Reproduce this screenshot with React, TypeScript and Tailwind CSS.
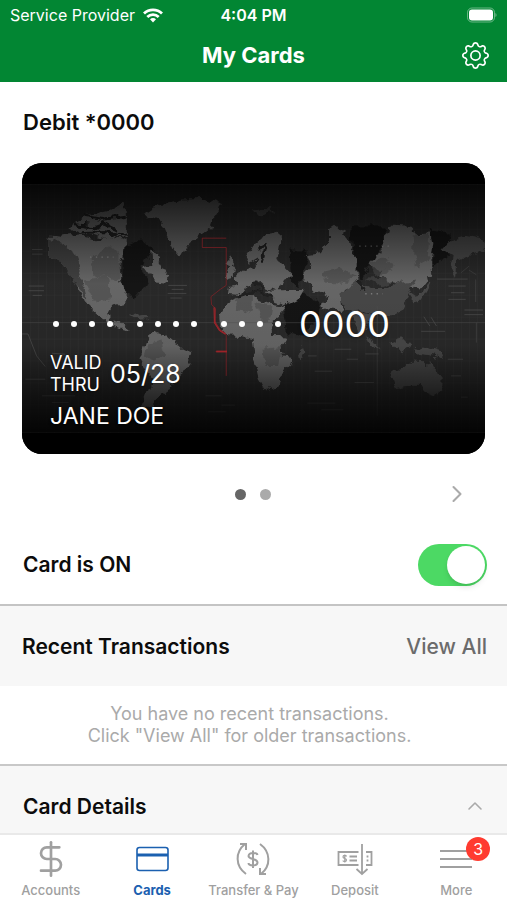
import { useState } from 'react';
import type { ReactNode } from 'react';
import { ChevronRight, ChevronUp, DollarSign } from 'lucide-react';
import { BsGear } from 'react-icons/bs';

const MAJOR_LAND = [
  // North America
  'M76 208L100 212L160 205L215 222L262 212L303 226L300 262L284 290L286 345L300 385L298 412L262 420L250 440L256 462L284 468L312 494L290 490L252 470L222 448L192 420L160 372L148 330L120 300L76 272Z',
  'M140 190L152 168L180 150L215 140L250 132L282 116L303 112L303 220L270 210L240 216L205 206L170 204Z',
  // Greenland
  'M356 146L400 116L470 100L540 98L592 116L570 150L560 182L530 206L494 230L476 262L464 270L446 248L430 212L412 170L384 158Z',
  // Labrador
  'M376 250L396 272L414 300L432 330L428 350L392 346L372 322L356 300L380 296Z',
  // South America
  'M366 520L392 500L430 515L452 535L504 560L492 602L462 626L440 668L408 690L380 728L350 724L362 690L384 640L360 612L344 582Z',
  // Europe
  'M664 268L686 236L718 208L764 200L770 232L762 282L806 330L776 344L760 376L722 362L708 348L686 356L664 372L640 386L610 384L614 362L640 356L628 336L660 312L688 302L700 276L672 292Z',
  'M604 336L620 300L606 292L616 276L632 300L628 330Z',
  // Africa
  'M600 420L636 394L686 384L700 404L746 414L784 420L760 450L742 462L746 510L790 512L768 542L772 572L806 576L798 604L772 628L766 656L724 674L706 640L694 590L684 520L650 510L614 508L586 478L584 446Z',
  // Middle East
  'M730 374L790 372L840 372L826 396L786 416L752 404Z',
  // Western Russia and Central Asia
  'M834 330L862 300L848 264L886 258L914 224L914 194L932 182L958 196L976 218L984 260L998 286L996 320L1008 350L962 372L950 400L956 440L928 424L896 436L890 410L916 392L868 372Z',
  // Siberia
  'M1034 306L1052 270L1076 256L1070 220L1096 196L1098 178L1156 182L1176 204L1220 202L1228 232L1218 290L1222 326L1186 370L1148 358L1108 352L1068 330L1080 308Z',
];

const MINOR_LAND = [
  'M948 386L1000 344L1040 366L1090 366L1124 352L1176 340L1154 384L1136 430L1098 450L1050 448L1010 430L962 436Z',
  'M980 430L1040 446L1026 486L1010 512L992 478Z',
  'M1146 378L1164 382L1178 392L1194 382L1206 356L1222 348L1206 380L1192 402L1164 406Z',
  'M1098 636L1104 612L1140 604L1164 584L1196 586L1208 598L1218 582L1230 604L1256 636L1254 672L1228 692L1204 684L1186 660L1152 660L1112 668Z',
  'M1172 540L1210 548L1250 560L1258 580L1222 568L1184 564Z',
  'M688 130L742 122L750 134L712 156Z',
  'M1100 530L1140 516L1162 540L1130 566Z',
  'M1024 510L1048 524L1066 550L1046 540Z',
  'M820 558L836 540L842 560L826 590Z',
  'M318 446L350 440L374 456L340 458Z',
  // Kamchatka
  'M1256 250L1288 216L1330 206L1378 216L1386 250L1346 262L1300 284L1296 330L1280 300L1286 270Z',
];

const DETAILS = [
  'M200 270L262 240L284 262L284 340L250 330L206 334Z',
  'M178 340L250 330L256 400L210 410Z',
  'M372 530L410 520L418 572L386 590L360 572Z',
  'M636 394L686 386L682 440L640 430Z',
  'M690 408L744 418L738 456L708 462Z',
  'M714 548L770 544L760 600L720 600Z',
  'M900 316L950 304L990 330L962 350L914 348L890 330Z',
  'M1034 300L1070 274L1108 290L1100 320L1052 330Z',
  'M1166 204L1216 206L1210 280L1180 310L1168 270Z',
  'M1020 338L1080 334L1106 350L1070 360Z',
];

const MARKINGS =
  'M30 260H62M30 274H62M20 370H66M20 384H66M32 398H60M440 368H496M450 380H486M438 392H494M446 406H480M1248 349H1340M1282 370H1334M1290 390H1330M1282 410H1334M1200 506H1272M1208 462L1226 490M1230 464L1246 490M1330 442H1386M1330 456H1386M860 580H886M940 560H990M880 626H932M976 590H1010M1032 574H1072M1000 660H1058M858 722H942M900 742H966M552 700H600M600 728H640M560 748H612M1280 590H1326M1290 640H1320M1320 704H1340M90 720H140M60 700H160M0 514H18L44 580L70 612M90 572L130 575M10 650H70';

function WorldMap() {
  return (
    <svg className="absolute inset-0 h-full w-full" viewBox="0 0 1392 876" preserveAspectRatio="xMidYMid slice" aria-hidden="true">
      <defs>
        <pattern id="grid" width="24" height="66" patternUnits="userSpaceOnUse">
          <path d="M1 0V66M0 1H24" stroke="#3a3a3a" strokeWidth="1.5" fill="none" />
        </pattern>
        <filter id="coast" x="-5%" y="-5%" width="110%" height="110%">
          <feTurbulence type="fractalNoise" baseFrequency="0.035" numOctaves="3" seed="4" />
          <feDisplacementMap in="SourceGraphic" scale="30" xChannelSelector="R" yChannelSelector="G" />
          <feGaussianBlur stdDeviation="1.5" />
        </filter>
        <linearGradient id="shade" x1="0" y1="0" x2="0" y2="1">
          <stop offset="0" stopColor="#000" stopOpacity="0.84" />
          <stop offset="0.18" stopColor="#000" stopOpacity="0.5" />
          <stop offset="0.4" stopColor="#000" stopOpacity="0.06" />
          <stop offset="0.65" stopColor="#000" stopOpacity="0.1" />
          <stop offset="0.85" stopColor="#000" stopOpacity="0.6" />
          <stop offset="1" stopColor="#000" stopOpacity="0.9" />
        </linearGradient>
      </defs>
      <rect width="1392" height="876" fill="#000" />
      <rect y="64" width="1392" height="746" fill="#2b2b2b" />
      <rect y="64" width="1392" height="746" fill="url(#grid)" opacity="0.6" />
      <g transform="translate(9 10)">
        <g filter="url(#coast)">
          <g fill="#191919">
            <path d="M290 240L350 220L390 250L350 300L370 345L330 400L290 380Z" />
            <path d="M796 250L850 260L840 310L826 360L800 350Z" />
            <path d="M780 420L830 380L890 410L880 450L836 510L790 500Z" />
            <path d="M980 180L1090 180L1070 250L1030 310L1010 340L990 290Z" />
            <path d="M1220 190L1280 200L1270 270L1226 300Z" />
          </g>
          <g fill="#6c6c6c">
            {MAJOR_LAND.map(d => <path key={d} d={d} />)}
          </g>
          <g fill="#4c4c4c">
            {MINOR_LAND.map(d => <path key={d} d={d} />)}
          </g>
          <g fill="#4f4f4f" opacity="0.6">
            {DETAILS.map(d => <path key={d} d={d} />)}
          </g>
          <path d="M76 215L140 250L170 330L190 410L150 350L120 300L76 272Z" fill="#444" />
          <path
            d="M150 176L210 182L240 170L280 190M180 150L230 160L300 150M170 200L240 196L300 208M700 250L724 238L710 290M680 352L710 364L724 390M1000 340L1020 370M640 390L690 376L740 392"
            stroke="#202020" strokeWidth="9" fill="none"
          />
        </g>
      </g>
      <path d={MARKINGS} stroke="#5a5a5a" strokeWidth="3" fill="none" opacity="0.6" />
      <path d="M1364 350V418M1366 480V540M1320 330L1344 310M1344 322L1366 336M0 480H1392M1068 430V760" stroke="#555" strokeWidth="3" fill="none" opacity="0.5" />
      <path d="M205 283H275M1014 250H1110M1032 393H1084" stroke="#bbb" strokeWidth="4" strokeDasharray="4 13" opacity="0.5" />
      <rect y="64" width="1392" height="746" fill="url(#shade)" />
      <path
        d="M614 226H542V254H614V368L596 380L568 402L570 426L582 438L578 480L594 504L614 516V640M582 567H616"
        stroke="#a32026" strokeWidth="3" fill="none" opacity="0.55"
      />
      <path d="M578 434L580 480L594 502L612 514M584 567H616" stroke="#c0242b" strokeWidth="6" fill="none" opacity="0.6" />
    </svg>
  );
}

function DotGroup() {
  return (
    <span className="flex gap-3" aria-hidden="true">
      {[0, 1, 2, 3].map(i => <span key={i} className="h-1.5 w-1.5 rounded-full bg-white" />)}
    </span>
  );
}

function TransferIcon() {
  return (
    <svg width="34" height="34" viewBox="0 0 34 34" fill="none" stroke="currentColor" strokeWidth="2">
      <path d="M10 32C-1 24 -1 10 9 2M4 2H10V8" />
      <path d="M24 2C35 10 35 24 25 32M30 32H24V26" />
      <path d="M21.500 13C21 10.500 13 10 12.500 14C12.500 18 21.500 16 21.500 20.500C21.500 24.500 12.500 24 12.500 21M17 8.500V26" strokeWidth="2" />
    </svg>
  );
}

function DepositIcon() {
  return (
    <svg width="36" height="34" viewBox="0 0 36 34" fill="none" stroke="currentColor" strokeWidth="1.800">
      <path d="M21.500 10H1.500V23H21.500M29 10H34.500V23H29" />
      <path d="M25 2V32M19.500 27L25 32L30.500 27" />
      <path d="M12.500 14.500H20M12.500 18.500H20M30.500 13.500V15.500M30.500 17.500V19.500" />
      <path d="M9.500 14.500C9 13 6 13 6 15C6 17 9.500 16 9.500 18C9.500 20 6 20 6 18.500M7.800 12.500V20.500" strokeWidth="1.200" />
    </svg>
  );
}

function CardsIcon() {
  return (
    <svg width="33" height="26" viewBox="0 0 33 26" fill="none" stroke="currentColor">
      <rect x="1" y="1.500" width="31" height="23" rx="2.500" strokeWidth="1.600" />
      <path d="M1 9H32" strokeWidth="3" />
    </svg>
  );
}

function MoreIcon() {
  return (
    <svg width="32" height="34" viewBox="0 0 32 34" stroke="currentColor" strokeWidth="2">
      <path d="M0 9H32M0 17H32M0 25H32" />
    </svg>
  );
}

const TABS: { label: string; icon: ReactNode; badge?: number }[] = [
  { label: 'Accounts', icon: <DollarSign size={40} strokeWidth={1.6} /> },
  { label: 'Cards', icon: <CardsIcon /> },
  { label: 'Transfer & Pay', icon: <TransferIcon /> },
  { label: 'Deposit', icon: <DepositIcon /> },
  { label: 'More', icon: <MoreIcon />, badge: 3 },
];

function Header() {
  return (
    <header className="shrink-0 bg-[#028633] text-white">
      <div className="grid h-7 grid-cols-3 items-center px-2.5 pt-0.5 text-base">
        <div className="flex items-center gap-2 whitespace-nowrap">
          <span>Service Provider</span>
          <svg width="20" height="15" viewBox="0 0 20 15" fill="none" stroke="currentColor" strokeWidth="2.800" className="shrink-0">
            <path d="M1 5.500C6 .6 14 .6 19 5.500" />
            <path d="M4.300 9C7.500 5.900 12.500 5.900 15.700 9" />
            <path d="M7 11.200C8.800 9.600 11.200 9.600 13 11.200L10 14.400Z" fill="currentColor" stroke="none" />
          </svg>
        </div>
        <span className="text-center font-semibold">4:04 PM</span>
        <svg width="32" height="16" viewBox="0 0 32 16" className="justify-self-end">
          <rect x="2.500" y="1" width="27" height="14" rx="4.500" fill="none" stroke="#fff" strokeOpacity="0.4" />
          <rect x="4" y="2.500" width="24" height="11" rx="3" fill="#fff" />
          <path d="M30.500 6V10C31.800 9.300 31.800 6.700 30.500 6Z" fill="#fff" fillOpacity="0.5" />
        </svg>
      </div>
      <div className="grid h-[54px] grid-cols-3 items-center px-[18px]">
        <h1 className="col-start-2 text-center text-[22px] font-bold">My Cards</h1>
        <button type="button" aria-label="Settings" className="justify-self-end">
          <BsGear size={27} />
        </button>
      </div>
    </header>
  );
}

export default function App() {
  const [cardOn, setCardOn] = useState(true);

  return (
    <div className="flex h-screen flex-col bg-white font-['Inter','Liberation_Sans',sans-serif] text-[#0c0c0c]">
      <Header />

      <main className="min-h-0 flex-1 overflow-y-auto [scrollbar-width:none]">
        <section>
          <h2 className="flex h-[81px] items-center px-[23px] text-[22px] font-semibold">Debit *0000</h2>

          <div className="relative mx-[22px] aspect-[464/292] overflow-hidden rounded-[20px] bg-black text-white">
            <WorldMap />
            <div className="relative flex h-full flex-col justify-end px-7 pb-[22px] text-shadow-md">
              <div className="mb-2 flex items-center pl-[3px]">
                <div className="flex gap-6">
                  <DotGroup />
                  <DotGroup />
                  <DotGroup />
                </div>
                <span className="ml-[18px] text-4xl leading-10">0000</span>
              </div>
              <div className="flex items-center gap-1">
                <span className="w-14 text-lg leading-[22px]">VALID THRU</span>
                <span className="text-[25px] leading-8">05/28</span>
              </div>
              <span className="mt-1 text-[23px] leading-8">JANE DOE</span>
            </div>
          </div>

          <div className="grid h-20 grid-cols-3 items-center px-[22px]">
            <div className="col-start-2 flex justify-center gap-3.5">
              <span className="h-[11px] w-[11px] rounded-full bg-[#666]" />
              <span className="h-[11px] w-[11px] rounded-full bg-[#aaa]" />
            </div>
            <button type="button" aria-label="Next card" className="mr-3.5 justify-self-end text-[#aaa]">
              <ChevronRight size={28} strokeWidth={1.8} />
            </button>
          </div>

          <div className="flex h-[70px] items-start justify-between pt-2.5 pr-5 pl-[23px]">
            <label htmlFor="card-on" className="text-[21px] leading-[42px] font-semibold">Card is ON</label>
            <input
              id="card-on"
              type="checkbox"
              role="switch"
              checked={cardOn}
              onChange={e => setCardOn(e.target.checked)}
              className="h-[42px] w-[69px] appearance-none rounded-full bg-gray-300 p-0.5 before:block before:h-[38px] before:w-[38px] before:rounded-full before:bg-white before:shadow-md before:content-[''] checked:bg-[#4cd964] checked:before:ml-auto"
            />
          </div>
        </section>

        <section className="border-t-2 border-[#c4c4c4]">
          <div className="flex h-20 items-center justify-between bg-[#f7f7f7] pr-5 pl-[22px] text-[21px]">
            <h2 className="font-semibold">Recent Transactions</h2>
            <a href="#all" className="font-medium text-[#6b6b6b]">View All</a>
          </div>
          <p className="py-[17px] pr-2 text-center text-lg leading-[22px] text-[#aaa]">
            You have no recent transactions.<br />
            Click "View All" for older transactions.
          </p>
        </section>

        <section className="border-t-2 border-[#c8c8c8]">
          <button type="button" className="flex h-20 w-full items-center justify-between bg-[#f7f7f7] pr-5 pl-[23px] text-left">
            <span className="text-[21px] font-semibold">Card Details</span>
            <ChevronUp size={24} strokeWidth={1.6} className="text-[#aaa]" />
          </button>
        </section>
      </main>

      <nav className="grid h-[67px] shrink-0 grid-cols-5 border-t-2 border-[#e9e9e9] bg-white">
        {TABS.map(tab => (
          <a
            key={tab.label}
            href="#tab"
            className={`flex flex-col items-center text-[13px] whitespace-nowrap ${tab.label === 'Cards' ? 'font-bold text-[#1b60b0]' : 'font-medium text-[#a0a0a0]'}`}
          >
            <span className="relative flex h-[47px] items-center">
              {tab.icon}
              {tab.badge && (
                <span className="absolute top-0.5 left-[26px] flex h-6 w-6 items-center justify-center rounded-full bg-[#ff3b30] text-base font-normal text-white">
                  {tab.badge}
                </span>
              )}
            </span>
            <span className="leading-4">{tab.label}</span>
          </a>
        ))}
      </nav>
    </div>
  );
}
